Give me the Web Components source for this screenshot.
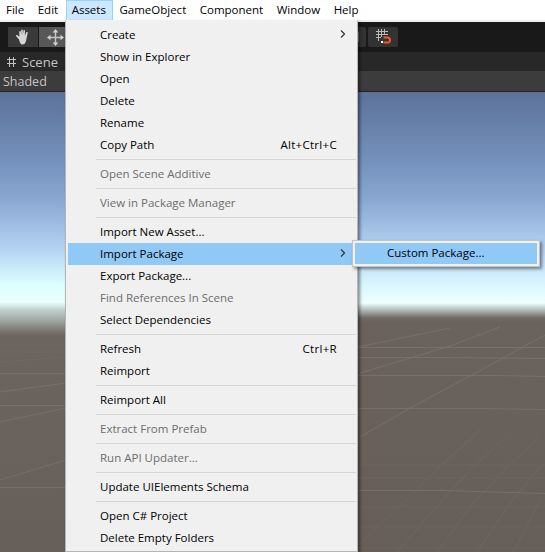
<!DOCTYPE html>
<html>
<head>
<meta charset="utf-8">
<style>
  html, body { margin: 0; height: 100%; overflow: hidden; }
  body { font: 11.5px "Open Sans", "Noto Sans", sans-serif; }
</style>
</head>
<body>
<unity-editor>
  <menu-bar slot="bar">
    <bar-item>File</bar-item>
    <bar-item>Edit</bar-item>
    <bar-item active>Assets</bar-item>
    <bar-item>GameObject</bar-item>
    <bar-item>Component</bar-item>
    <bar-item>Window</bar-item>
    <bar-item>Help</bar-item>
  </menu-bar>
  <editor-toolbar slot="toolbar"></editor-toolbar>
  <scene-tab slot="tab"></scene-tab>
  <scene-view slot="view"></scene-view>
  <drop-menu slot="menu">
    <menu-row arrow>Create</menu-row>
    <menu-row>Show in Explorer</menu-row>
    <menu-row>Open</menu-row>
    <menu-row>Delete</menu-row>
    <menu-row>Rename</menu-row>
    <menu-row keys="Alt+Ctrl+C">Copy Path</menu-row>
    <menu-sep></menu-sep>
    <menu-row disabled>Open Scene Additive</menu-row>
    <menu-sep></menu-sep>
    <menu-row disabled>View in Package Manager</menu-row>
    <menu-sep></menu-sep>
    <menu-row>Import New Asset...</menu-row>
    <menu-row arrow selected>Import Package</menu-row>
    <menu-row>Export Package...</menu-row>
    <menu-row disabled>Find References In Scene</menu-row>
    <menu-row>Select Dependencies</menu-row>
    <menu-sep></menu-sep>
    <menu-row keys="Ctrl+R">Refresh</menu-row>
    <menu-row>Reimport</menu-row>
    <menu-sep></menu-sep>
    <menu-row>Reimport All</menu-row>
    <menu-sep></menu-sep>
    <menu-row disabled>Extract From Prefab</menu-row>
    <menu-sep></menu-sep>
    <menu-row disabled>Run API Updater...</menu-row>
    <menu-sep></menu-sep>
    <menu-row>Update UIElements Schema</menu-row>
    <menu-sep></menu-sep>
    <menu-row>Open C# Project</menu-row>
    <menu-row>Delete Empty Folders</menu-row>
  </drop-menu>
  <sub-menu slot="menu">Custom Package...</sub-menu>
</unity-editor>

<script>
  const FONT = '"Open Sans", "Noto Sans", sans-serif';

  class Base extends HTMLElement {
    constructor(html) {
      super();
      this.attachShadow({mode: 'open'}).innerHTML = html;
    }
  }

  customElements.define('unity-editor', class extends Base {
    constructor() {
      super(`<style>
        :host { display: flex; flex-direction: column; position: relative; width: 545px; height: 552px; overflow: hidden; background: #3c3c3c; }
        .view { flex: 1; display: flex; min-height: 0; }
      </style>
      <slot name="bar"></slot>
      <slot name="toolbar"></slot>
      <slot name="tab"></slot>
      <div class="view"><slot name="view"></slot></div>
      <slot name="menu"></slot>`);
    }
  });

  customElements.define('menu-bar', class extends Base {
    constructor() {
      super(`<style>
        :host { display: flex; height: 20px; background: #fff; font: 11.5px ${FONT}; color: #000; }
      </style><slot></slot>`);
    }
  });

  customElements.define('bar-item', class extends Base {
    constructor() {
      super(`<style>
        :host { display: flex; align-items: center; height: 20px; padding: 0 6.500px 2px 5px; box-sizing: border-box; white-space: nowrap; border: 1px solid transparent; border-bottom: 0; }
        :host([active]) { background: #cce8ff; border-color: #99d1ff; }
      </style><slot></slot>`);
    }
  });

  customElements.define('editor-toolbar', class extends Base {
    constructor() {
      super(`<style>
        :host { display: flex; align-items: center; height: 32px; box-sizing: border-box; background: #191919; border-top: 2px solid #f0f0f0; padding-left: 8px; }
        .btn { width: 30px; height: 20px; background: #3a3a3a; display: flex; align-items: center; justify-content: center; flex: none; }
        .btn.on { background: #585858; width: 32px; margin-left: 1px; }
        .stub { width: 9px; height: 20px; background: #333; margin-left: auto; position: relative; border-radius: 0 2px 2px 0; }
        .stub::before { content: ""; position: absolute; left: 1px; top: 5px; width: 1px; height: 10px; background: #777; }
        .snap { width: 30px; margin: 0 147px 0 2px; background: #333; border-radius: 2px; }
      </style>
      <div class="btn"><svg width="16" height="16" viewBox="0 0 16 16"><path d="M4 10.500 1.200 7.300c-.7-.9.4-1.900 1.300-1.100L4.300 7.800V2.700c0-1 1.500-1 1.600 0l.3 3.600V1.200c0-1.100 1.600-1.100 1.600 0v5l.6-4.500c.1-1 1.700-.9 1.600.1L9.800 6.700l1.400-3.300c.4-.9 1.800-.4 1.500.5L11.500 9.500c-.4 3-1.300 6-4 6-2.200 0-2.700-2.500-3.500-5z" fill="#d6d6d6"/></svg></div>
      <div class="btn on"><svg width="17" height="17" viewBox="0 0 17 17"><path d="M7.800 3h1.400v4.800H14v1.400H9.200V14H7.800V9.200H3V7.800h4.800z" fill="#c4c4c4"/><path d="M8.500 0 11.300 3.500H5.700zM8.500 17 5.700 13.500H11.300zM0 8.500 3.500 5.700V11.300zM17 8.500 13.500 11.300V5.700z" fill="#d2d2d2"/></svg></div>
      <div class="stub"></div>
      <div class="btn snap"><svg width="16" height="18" viewBox="0 0 16 18"><path d="M3.500 1v12M6.500 1v8M9.500 1v6M1 3.500h12M1 6.500h12M1 9.500h5" stroke="#b8b8b8" fill="none"/><path d="M8.500 9.500h4a2.200 2.200 0 0 1 0 5h-4" stroke="#f0582a" stroke-width="2" fill="none"/><rect x="6" y="13" width="2" height="2" fill="#fff"/></svg></div>`);
    }
  });

  customElements.define('scene-tab', class extends Base {
    constructor() {
      super(`<style>
        :host { display: block; font: 13px ${FONT}; color: #c4c4c4; }
        .tab { display: flex; align-items: center; height: 19px; padding-left: 7px; gap: 6px; background: #282828; }
        .opts { display: flex; align-items: center; height: 21px; box-sizing: border-box; padding-left: 3px; background: #3c3c3c; border-bottom: 1px solid #232323; font-size: 12.500px; }
      </style>
      <div class="tab"><svg width="9" height="10" viewBox="0 0 9 10" fill="none" stroke="#c4c4c4"><path d="M2.500 0v10M6.500 0v10M0 2.500h9M0 6.500h9"/></svg><span>Scene</span></div>
      <div class="opts">Shaded</div>`);
    }
  });

  customElements.define('scene-view', class extends Base {
    constructor() {
      super(`<style>
        :host { display: flex; flex: 1; }
        .pane { position: relative; min-width: 0; }
        .left { width: 66px; flex: none; background: linear-gradient(#5c7299 0, #7591bd 70px, #8aa7d2 108px, #b5d4f3 158px, #dcffff 193px, #eaffff 210px, #c0d0cc 218px, #a0aaa5 228px, #7e7a75 238px, #6c645f 244px, #675f5a 460px); }
        .right { flex: 1; background: linear-gradient(#5c7299 0, #7591bd 70px, #8aa7d2 108px, #b5d4f3 158px, #dffaff 198px, #eeffff 211px, #b0bcb8 218px, #6f6a66 226px, #6a625d 230px, #665e59 460px); }
        svg { display: block; width: 100%; height: 100%; }
      </style>
      <div class="pane left">
        <svg viewBox="0 92 66 460" fill="none" stroke="#7a736e">
          <path d="M0 373.500H66M0 405.500H66M0 487.500H66M0 392 66 383M0 422 66 408M0 480 66 460" stroke-opacity=".8"/>
          <path d="M0 345H66M0 352H66M0 362 66 357" stroke-opacity=".35"/>
        </svg>
      </div>
      <div class="pane right">
        <svg viewBox="66 92 479 460" fill="none" stroke="#7d7671">
          <path d="M358 357.500H440L545 358.500M358 375.500H495L545 376.500M358 408.500H478L545 409.500M358 490.500H445L545 493.500M358 347.500H545" stroke-opacity=".7"/>
          <path d="M358 347 450 328M360 373 450 346 500 327M360 437 410 408 470 376 545 335" stroke-opacity=".7"/>
          <path d="M360 545 433 473 480 430M397 552 440 503 473 467 510 433M437 552 473 503 507 467 540 436M477 552 510 503 540 467M513 552 540 500" stroke-opacity=".3"/>
          <path d="M358 465H545M358 478H545M358 507H545M358 527H545M358 548H545" stroke-opacity=".22"/>
        </svg>
      </div>`);
    }
  });

  customElements.define('drop-menu', class extends Base {
    constructor() {
      super(`<style>
        :host { display: block; position: absolute; left: 65px; top: 20px; width: 293px; height: 532px; box-sizing: border-box; padding: 3px 1px 2px 2px; background: #f0f0f0; border: 1px solid #b5b5b5; border-top-color: #f0f0f0; font: 11.5px ${FONT}; color: #000; box-shadow: 2px 2px 3px rgba(0,0,0,.45); }
      </style><slot></slot>`);
    }
  });

  customElements.define('menu-row', class extends Base {
    constructor() {
      super(`<style>
        :host { display: flex; align-items: center; height: 22px; box-sizing: border-box; padding: 0 0 2px 32px; white-space: nowrap; }
        :host([disabled]) { color: #6d6d6d; }
        :host([selected]) { background: #90c8f6; }
        .keys { margin-left: auto; margin-right: 19px; letter-spacing: .3px; }
        .arrow { margin-left: auto; margin-right: 9px; width: 8px; height: 8px; }
      </style><slot></slot>`);
    }
    connectedCallback() {
      if (this.hasAttribute('keys')) {
        const el = document.createElement('span');
        el.className = 'keys';
        el.textContent = this.getAttribute('keys');
        this.shadowRoot.appendChild(el);
      }
      if (this.hasAttribute('arrow')) {
        const ns = 'http://www.w3.org/2000/svg';
        const svg = document.createElementNS(ns, 'svg');
        svg.setAttribute('class', 'arrow');
        svg.setAttribute('viewBox', '0 0 8 8');
        svg.innerHTML = '<path d="M2 0.500 5.500 4 2 7.500" fill="none" stroke="#333" stroke-width="1.200"/>';
        this.shadowRoot.appendChild(svg);
      }
    }
  });

  customElements.define('menu-sep', class extends Base {
    constructor() {
      super(`<style>
        :host { display: flex; align-items: center; height: 7px; padding-left: 28px; }
        i { flex: 1; height: 1px; background: #d7d7d7; }
      </style><i></i>`);
    }
  });

  customElements.define('sub-menu', class extends Base {
    constructor() {
      super(`<style>
        :host { display: flex; position: absolute; left: 352px; top: 240px; width: 188px; height: 27px; box-sizing: border-box; background: #f0f0f0; border: 1px solid #c4c4c4; padding: 2px; font: 11.5px ${FONT}; color: #000; box-shadow: 2px 2px 3px rgba(0,0,0,.45); }
        div { flex: 1; display: flex; align-items: center; background: #90c8f6; padding: 0 0 2px 32px; white-space: nowrap; }
      </style><div><slot></slot></div>`);
    }
  });
</script>
</body>
</html>
